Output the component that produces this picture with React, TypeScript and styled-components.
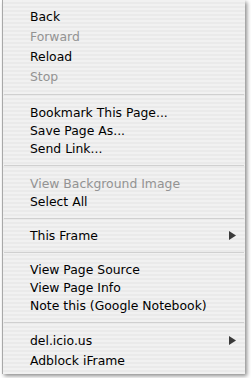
import React from "react";
import styled, { createGlobalStyle } from "styled-components";

const Global = createGlobalStyle`
  html, body { margin: 0; padding: 0; background: #ffffff; }
  body { width: 251px; height: 378px; overflow: hidden; }
`;

const Page = styled.div`
  display: flex;
  padding-left: 2px;
  height: 378px;
  box-sizing: border-box;
`;

const Menu = styled.div`
  width: 243px;
  height: 374px;
  box-sizing: border-box;
  padding-top: 6px;
  border-left: 1px solid #a8a8a8;
  background: repeating-linear-gradient(
    to bottom,
    #f1f1f1 0px,
    #f1f1f1 2px,
    #eaeaea 2px,
    #eaeaea 4px
  );
  box-shadow: 2px 2px 4px rgba(0, 0, 0, 0.45);
  font-family: "DejaVu Sans", "Liberation Sans", sans-serif;
  font-size: 12.4px;
  display: flex;
  flex-direction: column;
`;

const Item = styled.div<{ $disabled?: boolean; $h: number }>`
  height: ${(p) => p.$h}px;
  flex: none;
  display: flex;
  align-items: center;
  justify-content: space-between;
  padding-left: 27px;
  padding-right: 9px;
  color: ${(p) => (p.$disabled ? "#939393" : "#000000")};
  white-space: nowrap;
`;

const Separator = styled.div<{ $h: number }>`
  height: ${(p) => p.$h}px;
  flex: none;
  display: flex;
  align-items: center;
  padding: 0 1px;
  &::after {
    content: "";
    flex: 1;
    height: 1px;
    background: #d0d0d0;
  }
`;

const Arrow = () => (
  <svg width="7" height="9" viewBox="0 0 7 9">
    <path d="M0 0 L7 4.5 L0 9 Z" fill="#3a3a3a" />
  </svg>
);

type Entry =
  | { label: string; h: number; disabled?: boolean; sub?: boolean }
  | { sep: number };

const entries: Entry[] = [
  { label: "Back", h: 20 },
  { label: "Forward", h: 20, disabled: true },
  { label: "Reload", h: 20 },
  { label: "Stop", h: 20, disabled: true },
  { sep: 17 },
  { label: "Bookmark This Page...", h: 18 },
  { label: "Save Page As...", h: 18 },
  { label: "Send Link...", h: 18 },
  { sep: 17 },
  { label: "View Background Image", h: 18, disabled: true },
  { label: "Select All", h: 18 },
  { sep: 16 },
  { label: "This Frame", h: 18, sub: true },
  { sep: 16 },
  { label: "View Page Source", h: 18 },
  { label: "View Page Info", h: 18 },
  { label: "Note this (Google Notebook)", h: 18 },
  { sep: 16 },
  { label: "del.icio.us", h: 20, sub: true },
  { label: "Adblock iFrame", h: 20 },
];

export default function App() {
  return (
    <>
      <Global />
      <Page>
        <Menu>
          {entries.map((e, i) =>
            "sep" in e ? (
              <Separator key={i} $h={e.sep} />
            ) : (
              <Item key={i} $h={e.h} $disabled={e.disabled}>
                <span>{e.label}</span>
                {e.sub && <Arrow />}
              </Item>
            )
          )}
        </Menu>
      </Page>
    </>
  );
}
